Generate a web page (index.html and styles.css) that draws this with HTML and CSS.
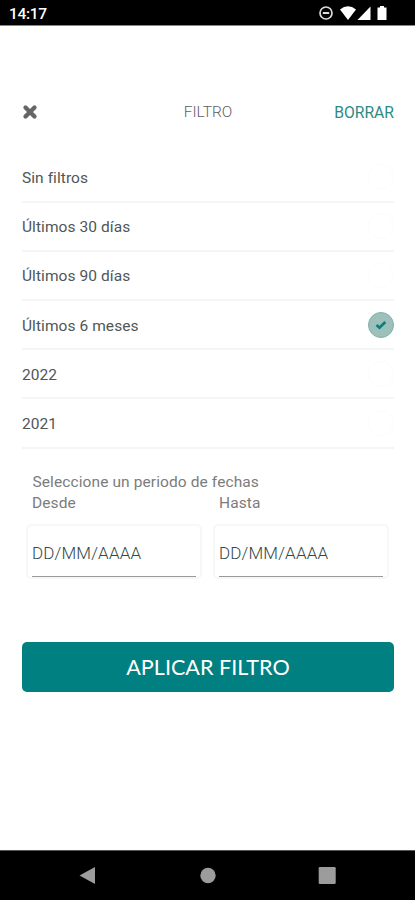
FILE: index.html
```html
<!DOCTYPE html>
<html lang="es">
<head>
<meta charset="utf-8">
<title>Filtro</title>
<link rel="stylesheet" href="styles.css">
</head>
<body>
<div class="screen">
  <div class="status">
    <span class="time">14:17</span>
    <svg class="status-icons" width="72" height="18" viewBox="0 0 72 18">
      <circle cx="8" cy="9" r="6" fill="none" stroke="#ddd" stroke-width="1.700"/>
      <path d="M4.800 9h6.400" stroke="#ddd" stroke-width="2"/>
      <path d="M22 5.500Q30 -1 38 5.500L30 16Z" fill="#fff"/>
      <path d="M52.500 2.500V16H39.500Z" fill="#fff"/>
      <path d="M62 2h4v1.500h2.500V16h-9V3.500H62z" fill="#fff"/>
    </svg>
  </div>
  <header class="header">
    <svg class="close" width="16" height="16" viewBox="0 0 16 16"><path d="M3.500 3.500l9 9M12.500 3.500l-9 9" stroke="#666" stroke-width="4.300" stroke-linecap="round"/></svg>
    <span class="title">FILTRO</span>
    <span class="clear">BORRAR</span>
  </header>
  <ul class="options">
    <li><span>Sin filtros</span><i class="radio"></i></li>
    <li><span>Últimos 30 días</span><i class="radio"></i></li>
    <li><span>Últimos 90 días</span><i class="radio"></i></li>
    <li><span>Últimos 6 meses</span><i class="radio on"><svg width="12" height="10" viewBox="0 0 12 10"><path d="M1.500 5l3 2.700L10.300 2" fill="none" stroke="#0c7e7b" stroke-width="2.700"/></svg></i></li>
    <li><span>2022</span><i class="radio"></i></li>
    <li><span>2021</span><i class="radio"></i></li>
  </ul>
  <section class="period">
    <p class="caption">Seleccione un periodo de fechas</p>
    <div class="dates">
      <label><span class="name">Desde</span><span class="field"><span class="value">DD/MM/AAAA</span></span></label>
      <label><span class="name">Hasta</span><span class="field"><span class="value">DD/MM/AAAA</span></span></label>
    </div>
  </section>
  <button class="apply">APLICAR FILTRO</button>
  <nav class="nav">
    <svg width="415" height="49" viewBox="0 0 415 49" fill="#9c9c9c">
      <path d="M79.500 24.500L95 16v17z"/>
      <circle cx="208" cy="24.500" r="7.700"/>
      <rect x="318.700" y="16" width="17" height="17" rx="1.200"/>
    </svg>
  </nav>
</div>
</body>
</html>
```
FILE: styles.css
```css
* { box-sizing: border-box; }
body { margin: 0; background: #fff; font-family: Roboto, "Liberation Sans", sans-serif; }
.screen { width: 415px; height: 900px; display: flex; flex-direction: column; overflow: hidden; }
.status { height: 26px; background: #000; border-bottom: 1px solid #888; color: #fff; display: flex; justify-content: space-between; padding: 4px 25px 0 9px; flex: none; }
.time { font-size: 15.500px; font-weight: 500; line-height: 20px; letter-spacing: -0.300px; }
.header { margin: 74px 21px 0 22px; height: 24px; display: grid; grid-template-columns: 1fr auto 1fr; align-items: center; font-size: 15.500px; flex: none; }
.title { color: #606060; font-weight: 300; }
.clear { color: #2d8a83; font-size: 15.700px; justify-self: end; }
.options { list-style: none; margin: 29.500px 21px 0 22px; padding: 0; flex: none; }
.options li { height: 49.200px; border-bottom: 2px solid #f5f5f5; display: flex; align-items: center; justify-content: space-between; font-size: 15.500px; letter-spacing: 0.070px; color: #505656; }
.options li span { padding-top: 2px; }
.radio { width: 26px; height: 26px; border-radius: 50%; border: 1px solid #fcfcfc; display: flex; align-items: center; justify-content: center; }
.radio.on { background: #9dc0bb; border-color: #86afaa; }
.period { margin: 23px 26px 0; color: #7c7c7c; font-size: 15.500px; letter-spacing: 0.100px; flex: none; }
.caption { margin: 0 0 0 6.500px; line-height: 21.500px; }
.dates { display: flex; gap: 11px; }
.dates label { width: 176px; display: block; }
.name { display: block; margin-left: 6px; line-height: 21.500px; }
.field { display: block; height: 55px; margin-top: 9px; padding: 0 5px; border: 2px solid #f7f7f7; border-radius: 5px; }
.value { display: flex; height: 51px; align-items: center; border-bottom: 1px solid #999; margin: 0 -1px; padding-top: 4px; font-size: 17px; font-weight: 300; letter-spacing: 0.150px; color: #344848; }
.apply { margin: 63px 21px 0 22px; height: 50px; border: 0; border-radius: 5px; background: #008080; color: #fff; font: 21.600px Lato, sans-serif; padding: 1px 0 0; flex: none; }
.nav { margin-top: auto; height: 50px; background: #000; border-top: 1px solid #555; flex: none; }
.nav svg { display: block; }
```
